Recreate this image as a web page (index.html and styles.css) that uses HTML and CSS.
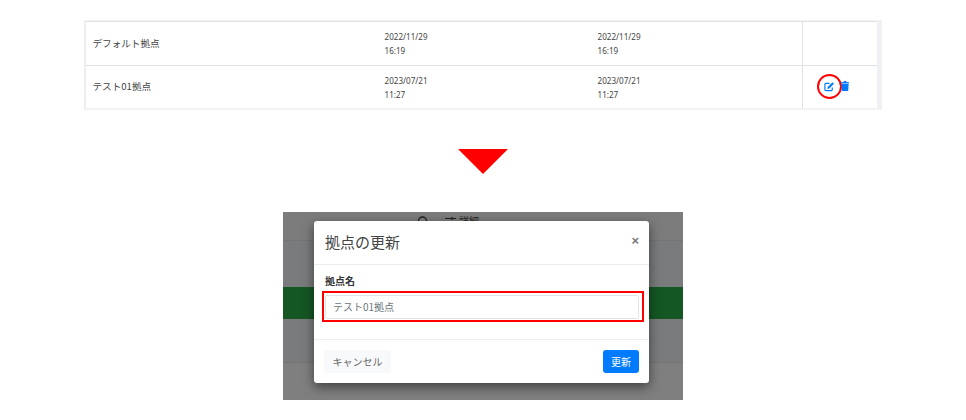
FILE: index.html
```html
<!DOCTYPE html>
<html lang="ja">
<head>
<meta charset="utf-8">
<title>拠点の更新</title>
<link rel="stylesheet" href="styles.css">
</head>
<body>
<main class="page">
  <section class="table-shot">
    <div class="table-row">
      <div class="cell name">デフォルト拠点</div>
      <div class="cell date">2022/11/29<br>16:19</div>
      <div class="cell date">2022/11/29<br>16:19</div>
      <div class="cell actions"></div>
    </div>
    <div class="table-row last">
      <div class="cell name">テスト01拠点</div>
      <div class="cell date">2023/07/21<br>11:27</div>
      <div class="cell date">2023/07/21<br>11:27</div>
      <div class="cell actions">
        <span class="icon-ring">
          <svg class="icon" viewBox="0 0 12 12" width="11" height="11"><path d="M9 7v2.6c0 .5-.4.9-.9.9H2c-.5 0-1-.4-1-.9V3.5c0-.5.5-1 1-1h4" fill="none" stroke="#007bff" stroke-width="1.3"/><path d="M4 6.6 9.2 1.4l1.7 1.7L5.7 8.3 3.8 8.6Z" fill="#007bff"/></svg>
        </span>
        <svg class="icon trash" viewBox="0 0 8 10" width="8" height="10"><path d="M0 1.3 2.6 1 3 0h2l.4 1L8 1.3V2.4H0ZM.4 3h7.2l-.3 6c0 .6-.4 1-1 1H1.700c-.6 0-1-.4-1-1Z" fill="#007bff"/></svg>
      </div>
    </div>
  </section>
  <div class="arrow"></div>
  <section class="modal-shot">
    <div class="backdrop">
      <div class="bg-head">
        <svg class="bg-search" viewBox="0 0 12 12" width="12" height="12"><circle cx="5.500" cy="6" r="4" fill="none" stroke="#222" stroke-width="1.4"/></svg>
        <svg class="bg-sliders" viewBox="0 0 11 8" width="11" height="8"><path d="M0 1.500h11M0 5.500h11" stroke="#222" stroke-width="1.2"/><circle cx="7" cy="1.500" r="1.3" fill="#222"/><circle cx="3.500" cy="5.500" r="1.3" fill="#222"/></svg>
        <span class="bg-detail">詳細</span>
      </div>
      <div class="bg-row r1"></div>
      <div class="bg-row green"></div>
      <div class="bg-row r2"></div>
      <div class="bg-row r3"></div>
    </div>
    <div class="modal">
      <header class="modal-head"><h1>拠点の更新</h1><span class="close">×</span></header>
      <div class="modal-body">
        <label class="label">拠点名</label>
        <div class="field-mark"><div class="field">テスト01拠点</div></div>
      </div>
      <footer class="modal-foot">
        <button class="btn cancel">キャンセル</button>
        <button class="btn update">更新</button>
      </footer>
    </div>
  </section>
</main>
</body>
</html>
```
FILE: styles.css
```css
* { box-sizing: border-box; }
html, body { margin: 0; padding: 0; background: #fff; }
body { width: 966px; height: 420px; overflow: hidden; font-family: "Noto Sans CJK JP", "Noto Sans", sans-serif; color: #212529; }
.page { display: flex; flex-direction: column; align-items: center; padding-top: 20px; }

.table-shot { width: 798px; margin-left: -1px; border-top: 1px solid #f3f4f6; border-left: 2px solid #eceef1; border-right: 5px solid #eff1f4; border-bottom: 2px solid #f2f3f5; }
.table-row { display: grid; grid-template-columns: 292px 213px 211px 1fr; height: 43.5px; border-top: 1px solid #dee2e6; }
.table-row.last { height: 43px; }
.cell { display: flex; align-items: center; padding-left: 7px; font-size: 9.6px; color: #444; }
.name { padding-bottom: 1px; }
.date { font-family: "Noto Sans", sans-serif; font-size: 8.1px; line-height: 14px; display: block; padding: 8px 0 0 7px; color: #444; }
.actions { border-left: 1px solid #dee2e6; padding-left: 14px; padding-bottom: 1px; gap: 0; }
.icon-ring { width: 25px; height: 25px; border: 2px solid #f00; border-radius: 50%; display: flex; align-items: center; justify-content: center; }
.icon { display: block; flex: none; }
.trash { margin-left: -1px; }

.arrow { width: 0; height: 0; margin-top: 39px; border-style: solid; border-width: 25px 25.5px 0; border-color: #f00 transparent transparent; }

.modal-shot { position: relative; width: 400px; height: 188px; margin-top: 38px; overflow: hidden; }
.backdrop { height: 100%; background: #7f7f7f; display: flex; flex-direction: column; }
.bg-head { height: 29px; border-bottom: 1px solid #727476; display: flex; padding: 3px 0 0 134px; font-size: 10px; line-height: 12px; color: #222; background: #7c7c7c; }
.bg-search { flex: none; }
.bg-sliders { flex: none; margin: 2px 3px 0 16px; }
.bg-detail { padding-top: 0; }
.bg-row.r1 { height: 46px; background: #797b7d; }
.bg-row.green { height: 32px; background: #155724; }
.bg-row.r2 { height: 44px; border-bottom: 1px solid #727476; background: #797b7d; }
.bg-row.r3 { flex: 1; background: #7f7f7f; }

.modal { position: absolute; left: 31px; top: 9px; width: 335px; height: 162px; background: #fff; border-radius: 3px; box-shadow: 0 4px 12px rgba(0,0,0,.5); display: flex; flex-direction: column; }
.modal-head { height: 44px; flex: none; display: flex; align-items: center; justify-content: space-between; padding: 0 10px 0 11px; border-bottom: 1px solid #e9ecef; }
.modal-head h1 { margin: 0; font-size: 15px; font-weight: 400; line-height: 20px; color: #444; }
.close { font-family: "Liberation Sans", sans-serif; font-weight: 700; font-size: 13px; color: #777; margin-top: -4px; }
.modal-body { flex: 1; padding: 9px 10px 0 11px; }
.label { display: block; font-size: 10px; font-weight: 700; line-height: 14px; margin-bottom: 3px; color: #333; }
.field-mark { border: 2px solid #f00; margin: 0 -5px 0 -3px; padding: 2px 3px 1px 1px; }
.field { height: 24px; border: 1px solid #e1e4e8; border-radius: 2px; padding-left: 7px; font-size: 10px; line-height: 21px; color: #6c757d; }
.modal-foot { height: 44px; flex: none; padding: 0 10px; border-top: 1px solid #edeff1; display: flex; justify-content: space-between; align-items: center; }
.btn { height: 23px; border: 0; border-radius: 3px; font-family: inherit; font-size: 10px; padding: 0; white-space: nowrap; }
.cancel { background: #f8f9fa; color: #666; width: 67px; }
.update { background: #007bff; color: #fff; width: 36px; }
```
